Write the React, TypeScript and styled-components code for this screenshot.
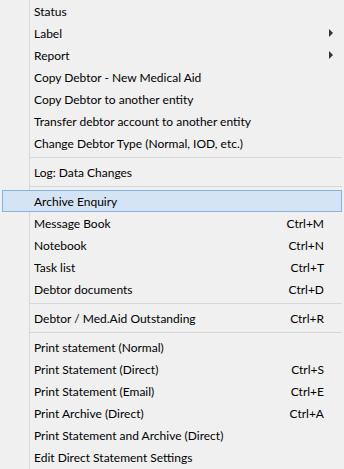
import styled, { createGlobalStyle } from "styled-components";

const GlobalStyle = createGlobalStyle`
  html, body {
    margin: 0;
    padding: 0;
    background: #f0f0f0;
  }
`;

const Menu = styled.div`
  width: 344px;
  height: 469px;
  display: flex;
  flex-direction: column;
  overflow: hidden;
  background: linear-gradient(
    to right,
    #f0f0f0 29px,
    #d7d7d7 29px,
    #d7d7d7 30px,
    #f0f0f0 30px
  );
  font-family: "Lato", "Noto Sans", sans-serif;
  font-size: 12px;
  color: #000;
  user-select: none;
`;

const Item = styled.div<{ $active?: boolean }>`
  height: 22px;
  box-sizing: border-box;
  margin: 0 2px;
  padding-left: 31px;
  display: flex;
  align-items: center;
  border: 1px solid ${(p) => (p.$active ? "#84b2e4" : "transparent")};
  background: ${(p) => (p.$active ? "#d5e4f5" : "transparent")};
  white-space: nowrap;
`;

const Label = styled.span`
  flex: 1;
`;

const Shortcut = styled.span`
  text-align: right;
`;

const ArrowSlot = styled.span`
  width: 17px;
  height: 100%;
  display: flex;
  align-items: center;
`;

const Arrow = styled.span`
  margin-left: 5px;
  width: 0;
  height: 0;
  border-top: 4px solid transparent;
  border-bottom: 4px solid transparent;
  border-left: 4px solid #333;
`;

const Separator = styled.div`
  height: 7px;
  flex-shrink: 0;
  display: flex;
  align-items: center;
  padding-left: 30px;
  padding-right: 2px;

  &::after {
    content: "";
    flex: 1;
    height: 1px;
    background: #d7d7d7;
  }
`;

type Entry =
  | { sep: true }
  | { label: string; shortcut?: string; sub?: boolean; active?: boolean };

const entries: Entry[] = [
  { label: "Status" },
  { label: "Label", sub: true },
  { label: "Report", sub: true },
  { label: "Copy Debtor - New Medical Aid" },
  { label: "Copy Debtor to another entity" },
  { label: "Transfer debtor account to another entity" },
  { label: "Change Debtor Type (Normal, IOD, etc.)" },
  { sep: true },
  { label: "Log: Data Changes" },
  { sep: true },
  { label: "Archive Enquiry", active: true },
  { label: "Message Book", shortcut: "Ctrl+M" },
  { label: "Notebook", shortcut: "Ctrl+N" },
  { label: "Task list", shortcut: "Ctrl+T" },
  { label: "Debtor documents", shortcut: "Ctrl+D" },
  { sep: true },
  { label: "Debtor / Med.Aid Outstanding", shortcut: "Ctrl+R" },
  { sep: true },
  { label: "Print statement (Normal)" },
  { label: "Print Statement (Direct)", shortcut: "Ctrl+S" },
  { label: "Print Statement (Email)", shortcut: "Ctrl+E" },
  { label: "Print Archive (Direct)", shortcut: "Ctrl+A" },
  { label: "Print Statement and Archive (Direct)" },
  { label: "Edit Direct Statement Settings" },
];

export default function App() {
  return (
    <>
      <GlobalStyle />
      <Menu>
        {entries.map((e, i) =>
          "sep" in e ? (
            <Separator key={i} />
          ) : (
            <Item key={i} $active={e.active}>
              <Label>{e.label}</Label>
              {e.shortcut && <Shortcut>{e.shortcut}</Shortcut>}
              <ArrowSlot>{e.sub && <Arrow />}</ArrowSlot>
            </Item>
          )
        )}
      </Menu>
    </>
  );
}
